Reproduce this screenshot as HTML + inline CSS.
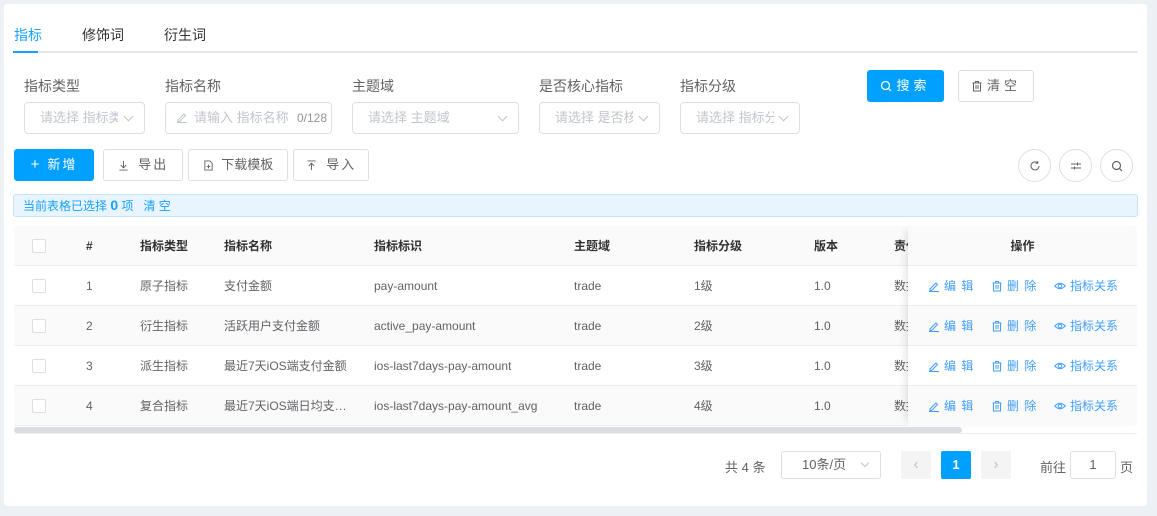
<!DOCTYPE html>
<html><head><meta charset="utf-8"><style>
*{box-sizing:border-box;margin:0;padding:0}
body{width:1157px;height:516px;background:#edf0f4;font-family:"Liberation Sans","Noto Sans CJK SC",sans-serif;font-size:12px;color:#606266;position:relative;overflow:hidden}
.a{position:absolute}
.card{left:4px;top:4px;width:1143px;height:502px;background:#fff;border-radius:3px}
.lab{font-size:14px;color:#606266;top:76px}
.inp{top:102px;height:32px;border:1px solid #dcdfe6;border-radius:4px;color:#c0c4cc;font-size:13px;line-height:30px;padding-left:15px;white-space:nowrap;overflow:hidden}
.ph{display:inline-block;overflow:hidden;vertical-align:top}
.chev{position:absolute;right:12px;top:10px;width:7px;height:7px;border-right:1px solid #c0c4cc;border-bottom:1px solid #c0c4cc;transform:rotate(45deg)}
.btn{height:32px;border:1px solid #dcdfe6;border-radius:3px;font-size:13px;color:#606266;line-height:30px;text-align:center;background:#fff;letter-spacing:2px}
.btn svg,.op svg{vertical-align:-2px;margin-right:4px}
.circ{width:33px;height:33px;border:1px solid #dcdfe6;border-radius:50%;top:149px;display:flex;align-items:center;justify-content:center}
.th{font-weight:bold;color:#303133;font-size:12px}
.row{left:14px;width:1123px;height:40px;border-bottom:1px solid #ebeef5}
.cell{position:absolute;top:0;line-height:40px;font-size:12px;white-space:nowrap}
.cb{position:absolute;left:18px;top:13px;width:14px;height:14px;border:1px solid #dcdfe6;border-radius:2px;background:#fff}
.orow{height:40px;border-bottom:1px solid #ebeef5;position:relative}
.op{position:absolute;top:0;line-height:40px;color:#409eff;font-size:12px;white-space:nowrap;letter-spacing:1px}
</style></head><body>
<svg width="0" height="0" style="position:absolute"><defs>
<symbol id="ed" viewBox="0 0 12 12"><path d="M2 9 L8 3 L9.5 4.5 L3.5 10.5 L2 10.5 Z M1 11.5 H11" fill="none" stroke="currentColor" stroke-width="1"/></symbol>
<symbol id="tr" viewBox="0 0 12 12"><path d="M1.5 3 H10.5 M4.5 3 V1.5 H7.5 V3 M2.5 3 V11 H9.5 V3 M5 5 V9 M7 5 V9" fill="none" stroke="currentColor" stroke-width="1"/></symbol>
<symbol id="ey" viewBox="0 0 12 12"><path d="M0.8 6 Q6 0.5 11.2 6 Q6 11.5 0.8 6 Z" fill="none" stroke="currentColor" stroke-width="1"/><circle cx="6" cy="6" r="1.8" fill="none" stroke="currentColor" stroke-width="1"/></symbol>
<symbol id="sr" viewBox="0 0 12 12"><circle cx="5.5" cy="5.5" r="4" fill="none" stroke="currentColor" stroke-width="1.2"/><path d="M8.5 8.5 L11 11" stroke="currentColor" stroke-width="1.2"/></symbol>
</defs></svg>
<div class="a card"></div>
<div class="a" style="left:14px;top:25px;font-size:14px;color:#1aa0ff">指标</div>
<div class="a" style="left:82px;top:25px;font-size:14px;color:#303133">修饰词</div>
<div class="a" style="left:164px;top:25px;font-size:14px;color:#303133">衍生词</div>
<div class="a" style="left:13px;top:51px;width:1125px;height:2px;background:#e4e7ed"></div>
<div class="a" style="left:13px;top:51px;width:25px;height:2px;background:#1aa0ff"></div>

<div class="a lab" style="left:24px">指标类型</div>
<div class="a lab" style="left:165px">指标名称</div>
<div class="a lab" style="left:352px">主题域</div>
<div class="a lab" style="left:539px">是否核心指标</div>
<div class="a lab" style="left:680px">指标分级</div>
<div class="a inp" style="left:24px;width:121px"><span class="ph" style="width:78px">请选择 指标类型</span><span class="chev"></span></div>
<div class="a inp" style="left:165px;width:167px;padding-left:10px"><svg width="12" height="12" style="color:#c0c4cc;vertical-align:-1px;margin-right:6px"><use href="#ed"/></svg>请输入 指标名称 <span style="position:absolute;right:4px;top:0;background:#fff;padding-left:2px;color:#909399;font-size:12px">0/128</span></div>
<div class="a inp" style="left:352px;width:167px">请选择 主题域<span class="chev"></span></div>
<div class="a inp" style="left:539px;width:121px"><span class="ph" style="width:78px">请选择 是否核心指标</span><span class="chev"></span></div>
<div class="a inp" style="left:680px;width:120px"><span class="ph" style="width:78px">请选择 指标分级</span><span class="chev"></span></div>
<div class="a btn" style="left:867px;top:70px;width:77px;background:#00a0ff;border-color:#00a0ff;color:#fff;letter-spacing:4px"><svg width="12" height="12"><use href="#sr"/></svg>搜索</div>
<div class="a btn" style="left:958px;top:70px;width:76px;letter-spacing:4px"><svg width="12" height="12"><use href="#tr"/></svg>清空</div>

<div class="a btn" style="left:14px;top:149px;width:80px;background:#00a0ff;border-color:#00a0ff;color:#fff"><span style="font-size:15px;margin-right:6px">+</span>新增</div>
<div class="a btn" style="left:103px;top:149px;width:80px"><svg width="11" height="11" viewBox="0 0 12 12"><path d="M6 1 V8 M3 5.5 L6 8.5 L9 5.5 M1.5 11 H10.5" fill="none" stroke="#606266"/></svg> 导出</div>
<div class="a btn" style="left:188px;top:149px;width:100px;letter-spacing:0"><svg width="11" height="11" viewBox="0 0 12 12"><path d="M2 1 H7.5 L10 3.5 V11 H2 Z M6 5 V9 M4 7 H8" fill="none" stroke="#606266"/></svg> 下载模板</div>
<div class="a btn" style="left:293px;top:149px;width:76px"><svg width="11" height="11" viewBox="0 0 12 12"><path d="M6 11 V4 M3 6.5 L6 3.5 L9 6.5 M1.5 1 H10.5" fill="none" stroke="#606266"/></svg> 导入</div>
<div class="a circ" style="left:1018px"><svg width="12" height="12" viewBox="0 0 12 12"><path d="M10 6 A4 4 0 1 1 8.5 2.8 M8.8 1 V3.2 H6.6" fill="none" stroke="#606266"/></svg></div>
<div class="a circ" style="left:1059px"><svg width="12" height="12" viewBox="0 0 12 12"><path d="M1 4 H11 M1 8 H11 M7.5 2.5 V5.5 M4.5 6.5 V9.5" fill="none" stroke="#606266"/></svg></div>
<div class="a circ" style="left:1100px"><svg width="12" height="12" style="color:#606266"><use href="#sr"/></svg></div>

<div class="a" style="left:13px;top:194px;width:1125px;height:23px;background:#e8f4fe;border:1px solid #c6e4fb;border-radius:3px;color:#1aa0ff;font-size:12px;line-height:21px;padding-left:9px">当前表格已选择 <b style="font-size:14px">0</b> 项 &nbsp; 清 空</div>

<div class="a row" style="top:226px;background:#fafafa">
<span class="cb"></span>
<span class="cell th" style="left:72px">#</span><span class="cell th" style="left:126px">指标类型</span><span class="cell th" style="left:210px">指标名称</span><span class="cell th" style="left:360px">指标标识</span><span class="cell th" style="left:560px">主题域</span><span class="cell th" style="left:680px">指标分级</span><span class="cell th" style="left:800px">版本</span><span class="cell th" style="left:880px">责任</span>
</div>
<div class="a row" style="top:266px"><span class="cb"></span><span class="cell" style="left:72px">1</span><span class="cell" style="left:126px">原子指标</span><span class="cell" style="left:210px">支付金额</span><span class="cell" style="left:360px">pay-amount</span><span class="cell" style="left:560px">trade</span><span class="cell" style="left:680px">1级</span><span class="cell" style="left:800px">1.0</span><span class="cell" style="left:880px">数据</span></div>
<div class="a row" style="top:306px;background:#fafafa"><span class="cb"></span><span class="cell" style="left:72px">2</span><span class="cell" style="left:126px">衍生指标</span><span class="cell" style="left:210px">活跃用户支付金额</span><span class="cell" style="left:360px">active_pay-amount</span><span class="cell" style="left:560px">trade</span><span class="cell" style="left:680px">2级</span><span class="cell" style="left:800px">1.0</span><span class="cell" style="left:880px">数据</span></div>
<div class="a row" style="top:346px"><span class="cb"></span><span class="cell" style="left:72px">3</span><span class="cell" style="left:126px">派生指标</span><span class="cell" style="left:210px">最近7天iOS端支付金额</span><span class="cell" style="left:360px">ios-last7days-pay-amount</span><span class="cell" style="left:560px">trade</span><span class="cell" style="left:680px">3级</span><span class="cell" style="left:800px">1.0</span><span class="cell" style="left:880px">数据</span></div>
<div class="a row" style="top:386px;background:#fafafa"><span class="cb"></span><span class="cell" style="left:72px">4</span><span class="cell" style="left:126px">复合指标</span><span class="cell" style="left:210px">最近7天iOS端日均支…</span><span class="cell" style="left:360px">ios-last7days-pay-amount_avg</span><span class="cell" style="left:560px">trade</span><span class="cell" style="left:680px">4级</span><span class="cell" style="left:800px">1.0</span><span class="cell" style="left:880px">数据</span></div>

<div class="a" style="left:908px;top:226px;width:229px;height:200px;background:#fff;box-shadow:-6px 0 8px -4px rgba(0,0,0,0.12)">
<div style="height:40px;background:#fafafa;border-bottom:1px solid #ebeef5;text-align:center;line-height:40px;font-weight:bold;color:#303133">操作</div>
<div class="orow"><span class="op" style="left:20px"><svg width="12" height="12"><use href="#ed"/></svg>编 辑</span><span class="op" style="left:83px"><svg width="12" height="12"><use href="#tr"/></svg>删 除</span><span class="op" style="left:146px;letter-spacing:0"><svg width="12" height="12"><use href="#ey"/></svg>指标关系</span></div>
<div class="orow" style="background:#fafafa"><span class="op" style="left:20px"><svg width="12" height="12"><use href="#ed"/></svg>编 辑</span><span class="op" style="left:83px"><svg width="12" height="12"><use href="#tr"/></svg>删 除</span><span class="op" style="left:146px;letter-spacing:0"><svg width="12" height="12"><use href="#ey"/></svg>指标关系</span></div>
<div class="orow"><span class="op" style="left:20px"><svg width="12" height="12"><use href="#ed"/></svg>编 辑</span><span class="op" style="left:83px"><svg width="12" height="12"><use href="#tr"/></svg>删 除</span><span class="op" style="left:146px;letter-spacing:0"><svg width="12" height="12"><use href="#ey"/></svg>指标关系</span></div>
<div class="orow" style="background:#fafafa;border:none"><span class="op" style="left:20px"><svg width="12" height="12"><use href="#ed"/></svg>编 辑</span><span class="op" style="left:83px"><svg width="12" height="12"><use href="#tr"/></svg>删 除</span><span class="op" style="left:146px;letter-spacing:0"><svg width="12" height="12"><use href="#ey"/></svg>指标关系</span></div>
</div>
<div class="a" style="left:14px;top:427px;width:948px;height:6px;background:#dcdde0;border-radius:3px"></div>
<div class="a" style="left:14px;top:433px;width:1123px;height:1px;background:#ebeef5"></div>

<div class="a" style="left:725px;top:457px;font-size:13px">共 4 条</div>
<div class="a" style="left:781px;top:451px;width:100px;height:28px;border:1px solid #dcdfe6;border-radius:3px;font-size:13px;line-height:26px;padding-left:20px">10条/页<span class="chev" style="top:8px;width:6px;height:6px"></span></div>
<div class="a" style="left:901px;top:451px;width:30px;height:28px;background:#f4f4f5;border-radius:2px;color:#c0c4cc;text-align:center;line-height:28px;font-size:16px">‹</div>
<div class="a" style="left:941px;top:451px;width:30px;height:28px;background:#00a0ff;border-radius:2px;color:#fff;text-align:center;line-height:28px;font-weight:bold;font-size:13px">1</div>
<div class="a" style="left:981px;top:451px;width:30px;height:28px;background:#f4f4f5;border-radius:2px;color:#c0c4cc;text-align:center;line-height:28px;font-size:16px">›</div>
<div class="a" style="left:1040px;top:457px;font-size:13px">前往</div>
<div class="a" style="left:1070px;top:451px;width:46px;height:28px;border:1px solid #dcdfe6;border-radius:3px;text-align:center;line-height:26px;font-size:13px">1</div>
<div class="a" style="left:1120px;top:457px;font-size:13px">页</div>
</body></html>
